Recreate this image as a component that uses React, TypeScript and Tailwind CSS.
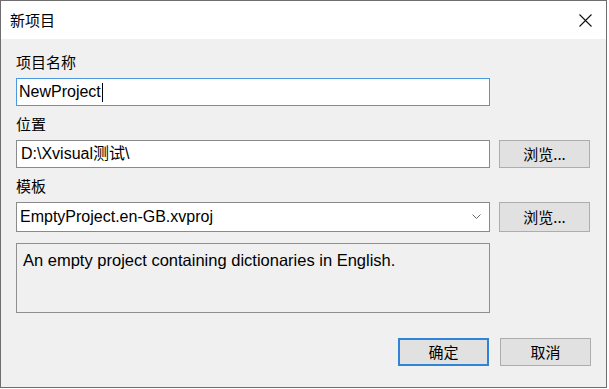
import React from "react";

const latin = "font-['Liberation_Sans','Noto_Sans_CJK_SC',sans-serif]";
const cjk = "font-['Noto_Sans_CJK_SC',sans-serif]";

const Label = ({ text }: { text: string }) => (
  <div className={`${cjk} h-5 text-[15px] leading-5 text-black`}>{text}</div>
);

const WinButton = ({ text, primary }: { text: string; primary?: boolean }) => (
  <button
    className={`${cjk} w-[91px] text-[15px] leading-5 text-black bg-[#e1e1e1] flex items-center justify-center ${
      primary ? "border-2 border-[#2f84d8]" : "border border-[#adadad]"
    }`}
  >
    {text}
  </button>
);

const NewProjectDialog = () => {
  return (
    <div className="w-[607px] h-[388px] border border-[#6e6e6e] bg-[#f0f0f0] flex flex-col">
      <div className="h-[38px] bg-white flex items-center justify-between pl-[9px] pr-[14px]">
        <span className={`${cjk} text-[15px] leading-5 text-black`}>新项目</span>
        <svg width="13" height="13" viewBox="0 0 13 13">
          <path d="M0.5 0.5 L12.5 12.5 M12.5 0.5 L0.5 12.5" stroke="#111" strokeWidth="1.1" />
        </svg>
      </div>

      <div className="flex flex-col px-[15px] pt-[13px]">
        <Label text="项目名称" />
        <div className="mt-[6px] w-[474px] h-[28px] bg-white border border-[#4a98e0] flex items-center pl-[2px]">
          <span className={`${latin} text-[16px] leading-5 text-black`}>NewProject</span>
          <span className="ml-[1px] w-px h-[19px] bg-black" />
        </div>

        <div className="mt-[8px]">
          <Label text="位置" />
        </div>
        <div className="mt-[6px] flex gap-[9px]">
          <div className="w-[474px] h-[28px] bg-white border border-[#8a8a8a] flex items-center pl-[4px]">
            <span className={`${latin} text-[16px] leading-5 text-black`}>D:\Xvisual测试\</span>
          </div>
          <WinButton text="浏览..." />
        </div>

        <div className="mt-[8px]">
          <Label text="模板" />
        </div>
        <div className="mt-[6px] flex gap-[9px] h-[30px]">
          <div className="w-[474px] h-[30px] bg-white border border-[#8a8a8a] flex items-center justify-between pl-[3px] pr-[8px]">
            <span className={`${latin} text-[16px] leading-5 text-black`}>EmptyProject.en-GB.xvproj</span>
            <svg width="9" height="6" viewBox="0 0 9 6">
              <path d="M0.5 0.5 L4.5 4.5 L8.5 0.5" fill="none" stroke="#666" strokeWidth="1" />
            </svg>
          </div>
          <WinButton text="浏览..." />
        </div>

        <div className="mt-[11px] w-[474px] h-[70px] border border-[#8f8f8f] bg-[#f0f0f0] pl-[6px] pt-[4px]">
          <span className={`${latin} text-[16.5px] leading-5 text-black`}>
            An empty project containing dictionaries in English.
          </span>
        </div>

        <div className="mt-[25px] h-[28px] flex justify-end gap-[11px]">
          <WinButton text="确定" primary />
          <WinButton text="取消" />
        </div>
      </div>
    </div>
  );
};

export default function App() {
  return (
    <div className="w-[609px] h-[389px] bg-white">
      <NewProjectDialog />
    </div>
  );
}
